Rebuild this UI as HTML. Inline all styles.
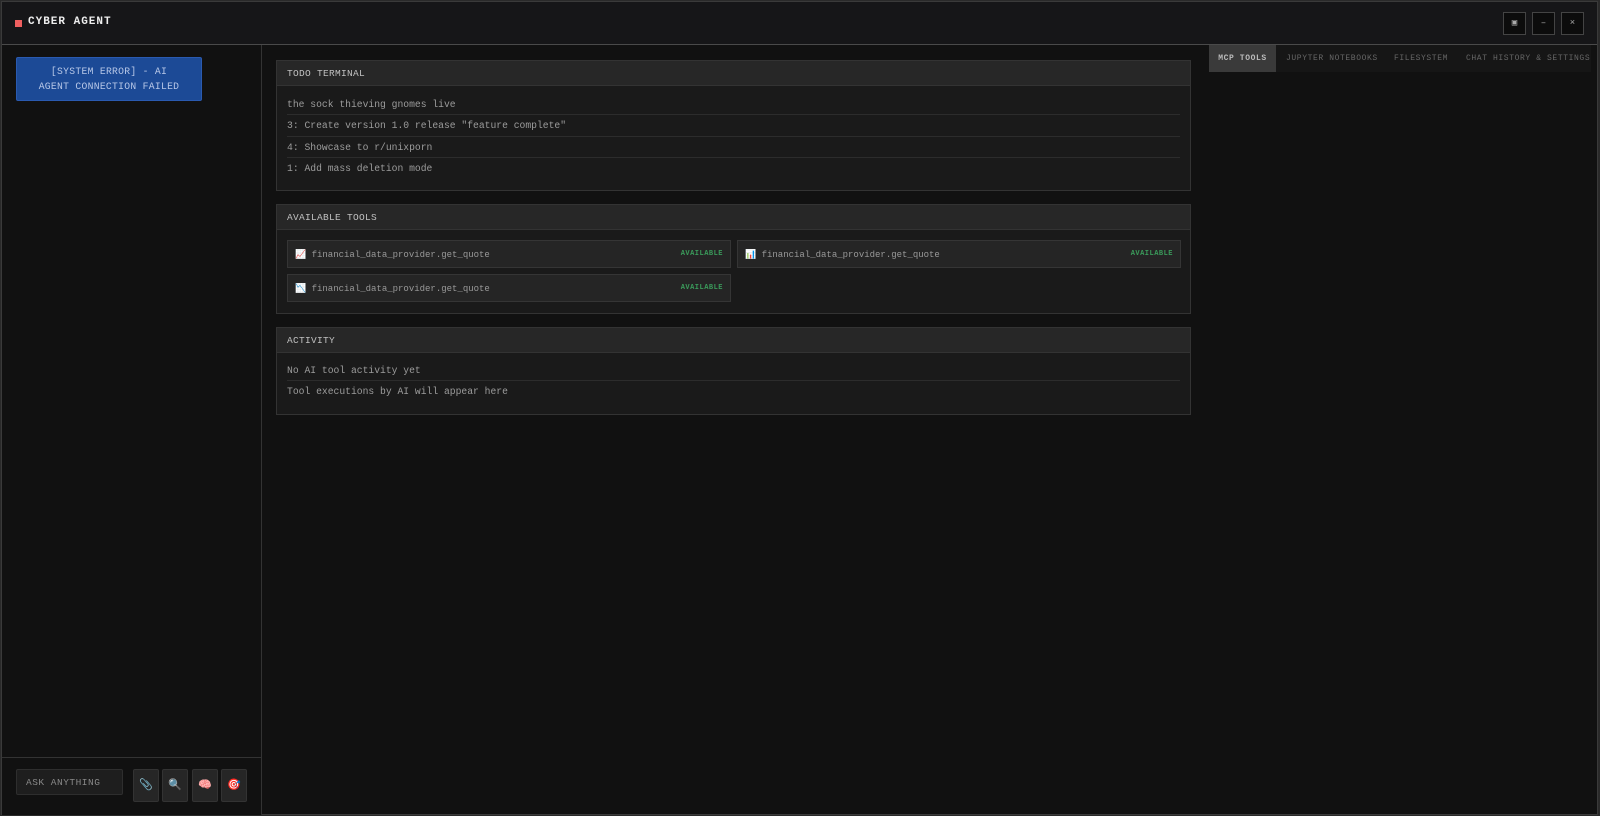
<!DOCTYPE html>
<html><head><style>
*{box-sizing:border-box;margin:0;padding:0}
body{width:1600px;height:816px;background:#2a2a2a;font-family:"Liberation Mono",monospace;color:#9c9c9c;overflow:hidden;position:relative}
.win{position:absolute;left:1px;top:1px;width:1597px;height:814px;background:#111;border:1px solid #3a3a3a}
.title{position:absolute;left:0;top:0;width:100%;height:43px;background:#161618;border-bottom:1px solid #4a4a4a}
.title .sq{position:absolute;left:13px;top:18px;width:7px;height:7px;background:#f06060}
.title .t{position:absolute;left:26px;top:14px;font-size:11px;font-weight:bold;color:#eee;letter-spacing:1px}
.wb{position:absolute;top:10px;width:23px;height:23px;border:1px solid #444;background:#0c0c0c;color:#aaa;font-size:9px;text-align:center;line-height:21px}
.side{position:absolute;left:0;top:43px;width:260px;height:770px;border-right:1px solid #333;background:#111}
.err{position:absolute;left:14px;top:12px;width:186px;height:44px;background:#1c4a96;border:1px solid #2a5ab0;border-radius:2px;color:#b8c8e8;font-size:9.7px;text-align:center;line-height:15px;padding-top:6px;letter-spacing:.3px}
.bot{position:absolute;left:0;top:712px;width:259px;height:58px;border-top:1px solid #333}
.ask{position:absolute;left:14px;top:11px;width:107px;height:26px;background:#1e1e1e;border:1px solid #2e2e2e;border-radius:2px;font-size:9.5px;color:#888;padding:7px 9px;letter-spacing:.5px}
.ib{position:absolute;top:11px;width:26px;height:33px;background:#262626;border:1px solid #333;border-radius:2px;font-size:11px;text-align:center;line-height:33px}
.panel{position:absolute;left:274px;width:915px;background:#1a1a1a;border:1px solid #333}
.ph{height:25px;background:#272727;border-bottom:1px solid #333;font-size:9.5px;color:#c0c0c0;padding:7px 10px;letter-spacing:.3px}
.row{margin:0 10px;height:21.4px;line-height:21.4px;font-size:9.7px;border-bottom:1px solid #2c2c2c}
.row:last-child{border-bottom:none}
.tool{position:absolute;width:444px;height:28px;background:#252525;border:1px solid #353535;font-size:9px;line-height:28px;padding-left:7px;color:#999}
.tool .av{position:absolute;right:7px;top:0;font-size:7px;color:#3a9a5a;font-weight:bold;letter-spacing:.5px;line-height:26px}
.tabs{position:absolute;left:1207px;top:43px;width:382px;height:27px;background:#161616;font-size:8px;letter-spacing:.6px;color:#666}
.tabs span{position:absolute;top:0;height:27px;line-height:27px}
</style></head><body>
<div class="win">
<div class="title"><div class="sq"></div><div class="t">CYBER AGENT</div>
<div class="wb" style="left:1501px">▣</div><div class="wb" style="left:1530px">–</div><div class="wb" style="left:1559px">×</div></div>
<div class="side"><div class="err">[SYSTEM ERROR] - AI<br>AGENT CONNECTION FAILED</div>
<div class="bot"><div class="ask">ASK ANYTHING</div>
<div class="ib" style="left:131px">📎</div><div class="ib" style="left:160px">🔍</div><div class="ib" style="left:190px">🧠</div><div class="ib" style="left:219px">🎯</div></div></div>
<div class="panel" style="top:58px;height:131px"><div class="ph">TODO TERMINAL</div><div style="padding-top:8px">
<div class="row">the sock thieving gnomes live</div><div class="row">3: Create version 1.0 release "feature complete"</div><div class="row">4: Showcase to r/unixporn</div><div class="row">1: Add mass deletion mode</div></div></div>
<div class="panel" style="top:202px;height:110px"><div class="ph">AVAILABLE TOOLS</div>
<div class="tool" style="left:10px;top:35px">📈 financial_data_provider.get_quote<span class="av">AVAILABLE</span></div>
<div class="tool" style="left:460px;top:35px">📊 financial_data_provider.get_quote<span class="av">AVAILABLE</span></div>
<div class="tool" style="left:10px;top:69px">📉 financial_data_provider.get_quote<span class="av">AVAILABLE</span></div></div>
<div class="panel" style="top:325px;height:88px"><div class="ph">ACTIVITY</div><div style="padding-top:7px">
<div class="row">No AI tool activity yet</div><div class="row">Tool executions by AI will appear here</div></div></div>
<div class="tabs"><span style="left:0;width:67px;background:#3a3a3a;color:#bbb;text-align:center;font-weight:bold">MCP TOOLS</span>
<span style="left:77px">JUPYTER NOTEBOOKS</span><span style="left:185px">FILESYSTEM</span><span style="left:257px">CHAT HISTORY &amp; SETTINGS</span></div>
</div>
</body></html>
